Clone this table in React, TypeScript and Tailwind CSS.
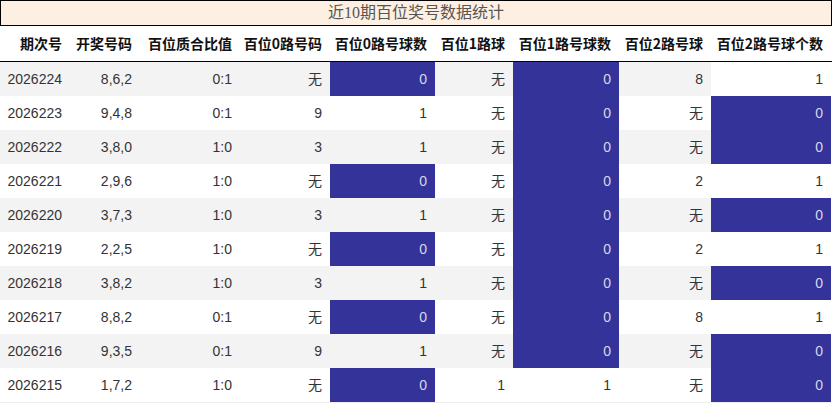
import React from "react";

type Cell = { v: string; blue?: boolean; white?: boolean };

const raw: string[][] = [
  ["2026224", "8,6,2", "0:1", "无", "0", "无", "0", "8", "1"],
  ["2026223", "9,4,8", "0:1", "9", "1", "无", "0", "无", "0"],
  ["2026222", "3,8,0", "1:0", "3", "1", "无", "0", "无", "0"],
  ["2026221", "2,9,6", "1:0", "无", "0", "无", "0", "2", "1"],
  ["2026220", "3,7,3", "1:0", "3", "1", "无", "0", "无", "0"],
  ["2026219", "2,2,5", "1:0", "无", "0", "无", "0", "2", "1"],
  ["2026218", "3,8,2", "1:0", "3", "1", "无", "0", "无", "0"],
  ["2026217", "8,8,2", "0:1", "无", "0", "无", "0", "8", "1"],
  ["2026216", "9,3,5", "0:1", "9", "1", "无", "0", "无", "0"],
  ["2026215", "1,7,2", "1:0", "无", "0", "1", "1", "无", "0"],
];

const headers = [
  "期次号",
  "开奖号码",
  "百位质合比值",
  "百位0路号码",
  "百位0路号球数",
  "百位1路球",
  "百位1路号球数",
  "百位2路号球",
  "百位2路号球个数",
];

const widths = ["w-[70px]", "w-[70px]", "w-[100px]", "w-[90px]", "w-[105px]", "w-[78px]", "w-[106px]", "w-[92px]", "w-[120px]"];

export default function App() {
  return (
    <div
      className="w-[832px] h-[403px] bg-white text-[#333] overflow-hidden"
      style={{ fontFamily: '"Liberation Sans", "Noto Sans CJK SC", sans-serif' }}
    >
      <div
        className="h-[26px] border border-black bg-[#fdf0e2] flex items-center justify-center text-[16px] text-[#555]"
        style={{ fontFamily: '"Liberation Serif", "Noto Sans CJK SC", serif' }}
      >
        近10期百位奖号数据统计
      </div>
      <div className="flex h-[36px] border-b border-black">
        {headers.map((h, i) => (
          <div
            key={i}
            className={`${widths[i]} shrink-0 flex items-center justify-end pr-2 text-[14px] font-bold text-[#111]`}
            style={{ fontFamily: '"Noto Sans CJK SC", sans-serif' }}
          >
            {h}
          </div>
        ))}
      </div>
      {raw.map((row, r) => {
        const gray = r % 2 === 0;
        return (
          <div key={r} className="flex h-[34px]">
            {row.map((v, c) => {
              const blue = v === "0" && (c === 4 || c === 6 || c === 8);
              const white = r === 0 && c === 8;
              const bg = blue ? "bg-[#333399] text-[#d8d8e8]" : white ? "bg-white" : gray ? "bg-[#f3f3f3]" : "bg-white";
              return (
                <div
                  key={c}
                  className={`${widths[c]} ${bg} shrink-0 flex items-center justify-end pr-2 text-[14px]`}
                >
                  {v}
                </div>
              );
            })}
          </div>
        );
      })}
      <div className="w-[831px] h-px bg-[#eeeeee]" />
    </div>
  );
}
